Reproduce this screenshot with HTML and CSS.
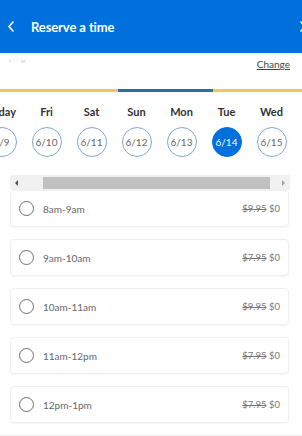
FILE: index.html
```html
<!DOCTYPE html>
<html lang="en">
<head>
    <meta charset="UTF-8">
    <meta name="viewport" content="width=device-width, initial-scale=1.0">
    <title>Reserve a time</title>
    <link rel="stylesheet" href="styles.css">
</head>
<body>
    <div class="header">
        <svg class="back" width="8" height="11" viewBox="0 0 8 11">
            <path d="M6 1 L2 5.5 L6 10" fill="none" stroke="#fff" stroke-width="1.6" stroke-linecap="round" stroke-linejoin="round"/>
        </svg>
        <h1>Reserve a time</h1>
        <svg class="next" width="8" height="11" viewBox="0 0 8 11">
            <path d="M2 1 L6 5.5 L2 10" fill="none" stroke="#fff" stroke-width="1.6" stroke-linecap="round" stroke-linejoin="round"/>
        </svg>
    </div>

    <div class="store-row">
        <span class="store-name">r ˉ ˉ ar</span>
        <a class="change" href="#">Change</a>
    </div>
    <div class="stripe"><div class="stripe-active"></div></div>

    <div class="days">
        <div class="day"><span class="day-name">Today</span><span class="date">6/9</span></div>
        <div class="day"><span class="day-name">Fri</span><span class="date">6/10</span></div>
        <div class="day"><span class="day-name">Sat</span><span class="date">6/11</span></div>
        <div class="day"><span class="day-name">Sun</span><span class="date">6/12</span></div>
        <div class="day"><span class="day-name">Mon</span><span class="date">6/13</span></div>
        <div class="day selected"><span class="day-name">Tue</span><span class="date">6/14</span></div>
        <div class="day"><span class="day-name">Wed</span><span class="date">6/15</span></div>
    </div>

    <div class="scrollbar">
        <span class="arrow left"></span>
        <div class="thumb"></div>
        <span class="arrow right"></span>
    </div>

    <div class="slots">
        <div class="slot">
            <span class="radio"></span>
            <span class="slot-time">8am-9am</span>
            <span class="price"><s>$9.95</s> $0</span>
        </div>
        <div class="slot">
            <span class="radio"></span>
            <span class="slot-time">9am-10am</span>
            <span class="price"><s>$7.95</s> $0</span>
        </div>
        <div class="slot">
            <span class="radio"></span>
            <span class="slot-time">10am-11am</span>
            <span class="price"><s>$9.95</s> $0</span>
        </div>
        <div class="slot">
            <span class="radio"></span>
            <span class="slot-time">11am-12pm</span>
            <span class="price"><s>$7.95</s> $0</span>
        </div>
        <div class="slot">
            <span class="radio"></span>
            <span class="slot-time">12pm-1pm</span>
            <span class="price"><s>$7.95</s> $0</span>
        </div>
    </div>
    <div class="footer"></div>
</body>
</html>
```

FILE: styles.css
```css
* {
    box-sizing: border-box;
    margin: 0;
    padding: 0;
}
body {
    width: 302px;
    height: 436px;
    overflow: hidden;
    background: #fff;
    font-family: Lato, "Open Sans", sans-serif;
    color: #333;
}
.header {
    height: 53px;
    background: #0071dc;
    display: flex;
    align-items: center;
    padding-left: 7px;
}
.header h1 {
    margin-left: 16px;
    font-size: 13px;
    font-weight: 700;
    color: #fff;
    letter-spacing: -0.1px;
}
.header .next {
    margin-left: auto;
    margin-right: -5px;
}
.store-row {
    height: 36px;
    display: flex;
    justify-content: space-between;
    align-items: flex-start;
    padding: 4px 12px 0 9px;
}
.store-name {
    font-size: 6px;
    color: #c8c8c8;
    line-height: 8px;
}
.change {
    font-size: 10px;
    line-height: 14px;
    color: #444;
    text-decoration: underline;
}
.stripe {
    height: 3px;
    background: #f1c75a;
}
.stripe-active {
    margin-left: 118px;
    width: 95px;
    height: 3px;
    background: #2a6db5;
}
.days {
    display: flex;
    margin-left: -21px;
    padding-top: 13px;
}
.day {
    width: 45px;
    flex-shrink: 0;
    display: flex;
    flex-direction: column;
    align-items: center;
}
.day-name {
    font-size: 11px;
    font-weight: 700;
    line-height: 14px;
    color: #333;
}
.date {
    margin-top: 8px;
    width: 30px;
    height: 30px;
    border: 1.5px solid #7fa8d2;
    border-radius: 50%;
    display: flex;
    justify-content: center;
    align-items: center;
    font-size: 10px;
    color: #666;
}
.selected .date {
    background: #0071dc;
    border-color: #0071dc;
    color: #fff;
}
.scrollbar {
    margin: 18px 12px 0 10px;
    height: 15px;
    background: #f1f1f1;
    display: flex;
    align-items: center;
}
.arrow {
    width: 0;
    height: 0;
    border-top: 3px solid transparent;
    border-bottom: 3px solid transparent;
}
.arrow.left {
    margin: 0 0 0 5px;
    border-right: 3px solid #505050;
}
.arrow.right {
    margin: 0 5px 0 0;
    border-left: 3px solid #a3a3a3;
}
.thumb {
    height: 12px;
    background: #c1c1c1;
    margin: 0 12px 0 25px;
    flex: 1;
}
.slots {
    padding: 0 13px 0 10px;
}
.slot {
    height: 37px;
    margin-bottom: 12px;
    border: 1px solid #efefef;
    border-radius: 4px;
    box-shadow: 0 1px 2px rgba(0, 0, 0, 0.04);
    display: flex;
    align-items: center;
    padding: 0 8px 0 8px;
}
.radio {
    width: 15px;
    height: 15px;
    border: 1.5px solid #6f6f6f;
    border-radius: 50%;
    flex-shrink: 0;
}
.slot-time {
    margin-left: 9px;
    font-size: 10px;
    color: #666;
}
.price {
    margin-left: auto;
    font-size: 9.5px;
    color: #777;
}
.price s {
    color: #777;
}
.footer {
    border-top: 1px solid #f0f0f0;
}
```
